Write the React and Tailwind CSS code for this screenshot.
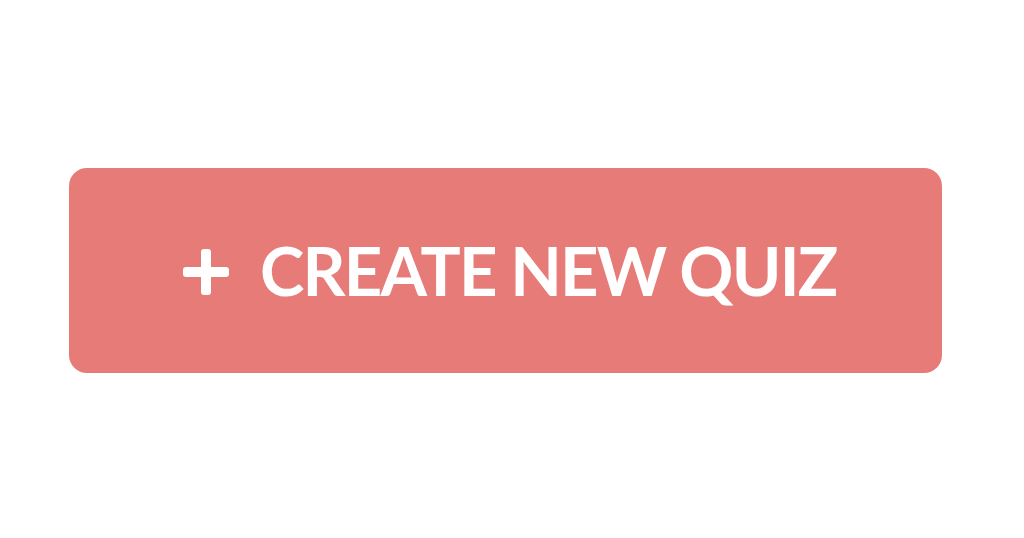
export default function App() {
  return (
    <div className="w-[1024px] h-[538px] bg-white pl-[69px] pt-[168px]" style={{ fontFamily: '"Lato", "Open Sans", sans-serif' }}>
      <button className="w-[873px] h-[205px] rounded-[18px] bg-[#e67b77] flex items-center pl-[114px] text-white">
        <svg width="46" height="46" viewBox="0 0 46 46" className="mr-[31px] mt-[2px]">
          <rect x="18" y="0" width="10" height="46" rx="3" fill="white" />
          <rect x="0" y="18" width="46" height="10" rx="3" fill="white" />
        </svg>
        <span className="text-[67px] font-bold leading-none tracking-[-1.8px]">CREATE NEW QUIZ</span>
      </button>
    </div>
  );
}
